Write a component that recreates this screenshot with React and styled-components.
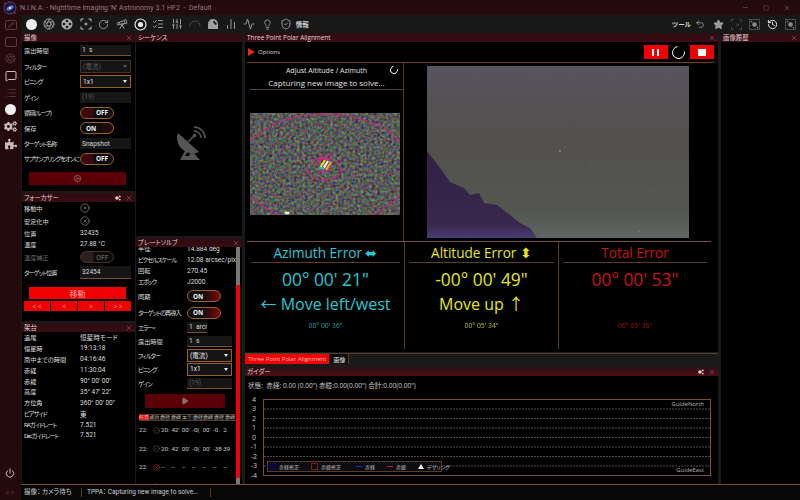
import React from 'react'
import styled, { createGlobalStyle, css } from 'styled-components'
import {
  Aperture,
  RotateCw,
  Telescope,
  ListChecks,
  SlidersVertical,
  Lightbulb,
  ShieldCheck,
  ChartNoAxesColumn,
  Star,
  History,
  Power,
  Pencil,
  MessageSquare,
  List,
  Play,
  X,
  CircleX,
  CircleCheck,
  Minus,
  Square,
  Activity,
  Undo2,
  Cog,
} from 'lucide-react'
import { FaCogs, FaPuzzlePiece } from 'react-icons/fa'

const TAN = '#7a5030'
const LINE = '#5a3c24'

const GlobalStyle = createGlobalStyle`
  html, body { margin: 0; padding: 0; background: #1a1a1a; }
  body {
    width: 800px;
    height: 500px;
    overflow: hidden;
    font-family: "Open Sans", "Noto Sans CJK JP", sans-serif;
    font-feature-settings: "palt";
    color: #d8d8d8;
  }
  * { box-sizing: border-box; }
`

const Window = styled.div`
  width: 800px;
  height: 500px;
  display: flex;
  flex-direction: column;
  overflow: hidden;
`

const TitleBar = styled.div`
  height: 15px;
  flex: none;
  display: flex;
  align-items: center;
  background: #24090d;
  padding-left: 3px;
  color: #8d7c7f;
  font-family: Roboto, sans-serif;
  font-size: 7.1px;
`

const TitleText = styled.span`
  margin-left: 3px;
  white-space: pre;
`

const WinButtons = styled.div`
  margin-left: auto;
  display: flex;
  align-items: center;
  gap: 14px;
  padding-right: 9px;
  color: #6e5a5d;
`

const Below = styled.div`
  flex: 1;
  min-height: 0;
  display: flex;
`

const Sidebar = styled.div`
  width: 21px;
  flex: none;
  display: flex;
  flex-direction: column;
  align-items: center;
  background: #24090d;
  padding-top: 1px;
`

const SideIcon = styled.div`
  height: 17px;
  display: flex;
  align-items: center;
  justify-content: center;
  color: ${(p) => (p.$on ? '#c9bcbc' : '#54343a')};
`

const SideBox = styled.div`
  width: 12px;
  height: 10px;
  border: 1px solid #5a3a40;
  border-radius: 2px;
  display: flex;
  align-items: center;
  justify-content: center;
  color: #7a5a60;
`

const SideFoot = styled.div`
  margin-top: auto;
  display: flex;
  flex-direction: column;
  align-items: center;
  gap: 10px;
  padding-bottom: 3px;
  color: #e0e0e0;
  font-size: 7px;
`

const DimText = styled.span`
  color: #6a4a4e;
  letter-spacing: 1px;
`

const WhiteDot = styled.div`
  width: ${(p) => p.$size || 11}px;
  height: ${(p) => p.$size || 11}px;
  border-radius: 50%;
  background: #eeeeee;
`

const Content = styled.div`
  flex: 1;
  min-width: 0;
  display: flex;
  flex-direction: column;
`

const Toolbar = styled.div`
  height: 18px;
  flex: none;
  display: flex;
  align-items: center;
  background: #181818;
  padding-left: 1px;
`

const ToolIcon = styled.div`
  width: 18.2px;
  height: 18px;
  flex: none;
  display: flex;
  align-items: center;
  justify-content: center;
  color: ${(p) => (p.$dim ? '#4a4a4a' : p.$bright ? '#f0f0f0' : '#9a9a9a')};
`

const ToolLabel = styled.span`
  font-size: 6.5px;
  font-weight: 700;
  color: #d0d0d0;
  margin-left: ${(p) => p.$ml || 0}px;
`

const ToolSpacer = styled.div`
  flex: 1;
`

const Main = styled.div`
  flex: 1;
  min-height: 0;
  display: flex;
`

const Column = styled.div`
  width: ${(p) => p.$w}px;
  margin-left: ${(p) => p.$ml || 0}px;
  flex: none;
  display: flex;
  flex-direction: column;
`

const Panel = styled.div`
  height: ${(p) => (p.$h ? `${p.$h}px` : 'auto')};
  flex: ${(p) => (p.$h ? 'none' : 1)};
  margin-top: ${(p) => p.$mt || 0}px;
  display: flex;
  flex-direction: column;
  background: #000;
  overflow: hidden;
`

const Head = styled.div`
  height: 9px;
  flex: none;
  display: flex;
  align-items: center;
  gap: 5px;
  padding: 0 2px;
  background: ${(p) =>
    p.$glow
      ? 'linear-gradient(#2a1015, #4e0c14)'
      : 'linear-gradient(#2c0c12, #3a0b12)'};
  font-size: 6.4px;
  color: #e2d5d5;
  white-space: nowrap;
`

const HeadTools = styled.div`
  margin-left: auto;
  display: flex;
  align-items: center;
  gap: 4px;
  color: #a06a70;
`

const Row = styled.div`
  display: grid;
  grid-template-columns: ${(p) => p.$label || 56}px 1fr;
  align-items: center;
  height: ${(p) => p.$h || 15.5}px;
  padding: 0 ${(p) => p.$pr ?? 4}px 0 2px;
  font-family: Roboto, "Noto Sans CJK JP", sans-serif;
  font-size: 6.6px;
  white-space: nowrap;
  color: ${(p) => (p.$dim ? '#6a6a6a' : '#dcdcdc')};
`

const RowLabel = styled.span`
  overflow: hidden;
  font-size: 6.2px;
  letter-spacing: ${(p) => (p.$kana ? '-1px' : '0')};
`

const Value = styled.span`
  color: inherit;
`

const Input = styled.div`
  height: ${(p) => p.$h || 11}px;
  width: ${(p) => (p.$w ? `${p.$w}px` : 'auto')};
  overflow: hidden;
  display: flex;
  align-items: center;
  padding-left: 2px;
  background: #161616;
  color: ${(p) => (p.$dim ? '#5a5a5a' : '#d8d8d8')};
  ${(p) =>
    p.$line &&
    css`
      border-bottom: 1px solid ${TAN};
    `}
`

const Select = styled.div`
  height: ${(p) => p.$h || 13}px;
  display: flex;
  align-items: center;
  justify-content: space-between;
  padding: 0 3px 0 2px;
  background: #141414;
  border: 1px solid ${(p) => (p.$dim ? '#4a3020' : '#9a6028')};
  color: ${(p) => (p.$dim ? '#5a5a5a' : '#e8e8e8')};
`

const Caret = styled.i`
  width: 0;
  height: 0;
  border-left: 2.5px solid transparent;
  border-right: 2.5px solid transparent;
  border-top: 3px solid ${(p) => (p.$dim ? '#5a5a5a' : '#e8e8e8')};
`

const ToggleBox = styled.div`
  width: ${(p) => p.$w || 34}px;
  height: 12px;
  border: 1px solid ${(p) => (p.$dim ? '#4a3020' : '#9a6028')};
  border-radius: 6px;
  display: flex;
  align-items: center;
  justify-content: ${(p) => (p.$on ? 'flex-start' : 'flex-end')};
  padding: 0 5px;
  font-family: "Open Sans", sans-serif;
  font-size: 6.4px;
  font-weight: 700;
  color: ${(p) => (p.$dim ? '#555' : '#f2f2f2')};
  background: ${(p) =>
    p.$on
      ? `linear-gradient(90deg, #0c0c0c 45%, ${p.$hot ? '#7a0a0a' : '#2a0a0a'} 100%)`
      : `linear-gradient(90deg, ${p.$dim ? '#2a2020' : '#3a0a0e'} 36%, #0c0c0c 40%)`};
`

const Toggle = ({ on, dim, hot, w }) => (
  <ToggleBox $on={on} $dim={dim} $hot={hot} $w={w}>
    {on ? 'ON' : 'OFF'}
  </ToggleBox>
)

const Action = styled.div`
  width: ${(p) => p.$w || 97}px;
  height: ${(p) => p.$h || 13}px;
  margin: ${(p) => p.$mt || 0}px 0 0 ${(p) => p.$ml ?? 7}px;
  display: flex;
  align-items: center;
  justify-content: center;
  background: ${(p) => (p.$hot ? '#f00000' : '#5a0006')};
  color: ${(p) => (p.$hot ? '#f4a8a8' : '#8a6a6a')};
  font-size: 8px;
`

const StepRow = styled.div`
  display: grid;
  grid-template-columns: repeat(4, 1fr);
  gap: 1px;
  margin: 2px 4px 0 2px;
`

const Step = styled.div`
  height: 10px;
  display: flex;
  align-items: center;
  justify-content: center;
  background: #f00000;
  color: #f4b0b0;
  font-size: 6.4px;
`

const Dish = styled.div`
  flex: 1;
  display: flex;
  align-items: center;
  justify-content: center;
  padding: 8px 0 0 3px;
`

const SolveBody = styled.div`
  flex: 1;
  min-height: 0;
  display: flex;
`

const SolveContent = styled.div`
  flex: 1;
  min-width: 0;
  overflow: hidden;
`

const ClipTop = styled.div`
  margin-top: -4px;
`

const ScrollTrack = styled.div`
  width: 4px;
  flex: none;
  margin-right: 2px;
  display: flex;
  flex-direction: column;
  background: #777;
  padding: 38px 0 6px;
`

const ScrollThumb = styled.div`
  flex: 1;
  background: #f00000;
`

const ResultTable = styled.div`
  margin: 6px 0 0 3px;
  font-family: Roboto, sans-serif;
  font-size: 6.2px;
`

const ResultHead = styled.div`
  display: grid;
  grid-template-columns: 10px repeat(8, 1fr);
  height: 7px;
  align-items: center;
  background: #0c0c0c;
  border-top: 1px solid ${LINE};
  border-bottom: 1px solid ${LINE};
  overflow: hidden;
  white-space: nowrap;
`

const ResultHeadCell = styled.span`
  overflow: hidden;
  min-width: 0;
  font-size: 5.2px;
  ${(p) =>
    p.$on &&
    css`
      background: #f00000;
      color: #f2d0d0;
    `}
`

const ResultRow = styled.div`
  display: grid;
  grid-template-columns: 14px 8px repeat(7, 10.4px);
  align-items: center;
  height: ${(p) => p.$h || 18.6}px;
  white-space: nowrap;
  color: #c8c8c8;
`

const Cell = styled.span`
  overflow: hidden;
  color: ${(p) => (p.$icon ? '#a8a8a8' : 'inherit')};
  display: flex;
  align-items: center;
`

const BadCell = styled(Cell)`
  color: #f04040;
`

const OptionsBar = styled.div`
  height: 21px;
  flex: none;
  margin: 0 4px 0 2px;
  display: flex;
  align-items: center;
  border-bottom: 1px solid #6a4418;
  font-size: 6px;
`

const OptionsArrow = styled.i`
  margin-left: 1px;
  width: 0;
  height: 0;
  border-left: 7px solid #e03010;
  border-top: 4.5px solid transparent;
  border-bottom: 4.5px solid transparent;
`

const OptionsLabel = styled.span`
  margin-left: 3px;
  color: #d8d8d8;
`

const RedButton = styled.div`
  width: 24px;
  height: 14px;
  flex: none;
  display: flex;
  align-items: center;
  justify-content: center;
  background: #f00000;
  color: #fff;
  margin-left: ${(p) => (p.$auto ? 'auto' : `${p.$ml || 0}px`)};
`

const PauseBars = styled.i`
  width: 7px;
  height: 7px;
  border-left: 2.5px solid #fff;
  border-right: 2.5px solid #fff;
`

const StopBlock = styled.i`
  width: 8px;
  height: 7px;
  background: #fff;
`

const Spinner = styled.div`
  width: ${(p) => p.$size}px;
  height: ${(p) => p.$size}px;
  margin-left: ${(p) => p.$ml || 0}px;
  border: 1px solid #f0f0f0;
  border-top-color: transparent;
  border-radius: 50%;
  transform: rotate(35deg);
  flex: none;
`

const Viewer = styled.div`
  height: 179px;
  flex: none;
  margin: 0 7px 0 2px;
  display: flex;
  border-bottom: 1px solid ${TAN};
`

const SolveSide = styled.div`
  width: 157px;
  flex: none;
  border-right: 1px solid ${LINE};
  display: flex;
  flex-direction: column;
  padding-left: 3px;
`

const SideTitle = styled.div`
  height: 27px;
  display: flex;
  flex-direction: column;
  align-items: center;
  justify-content: flex-end;
  border-bottom: 1px solid ${LINE};
  color: #e0e0e0;
  position: relative;
`

const SideLine = styled.span`
  font-size: ${(p) => p.$size}px;
  line-height: 12px;
`

const SideSpin = styled.div`
  position: absolute;
  top: 3px;
  right: 5px;
`

const Picture = styled.div`
  margin-top: ${(p) => p.$mt}px;
  margin-left: ${(p) => p.$ml || 0}px;
  width: ${(p) => p.$w}px;
  height: ${(p) => p.$h}px;
  flex: none;
  & > svg {
    display: block;
  }
`

const ErrorGrid = styled.div`
  height: 107px;
  flex: none;
  margin: 0 7px 0 2px;
  display: grid;
  grid-template-columns: 157px 154px 1fr;
`

const ErrorCol = styled.div`
  display: flex;
  flex-direction: column;
  align-items: center;
  padding: 0 4px;
  color: ${(p) => p.$color};
  & + & {
    border-left: 1px solid ${LINE};
  }
`

const ErrorTitle = styled.div`
  width: 100%;
  height: 21px;
  text-align: center;
  font-size: 13.6px;
  line-height: 21px;
  border-bottom: 1px solid ${LINE};
  white-space: nowrap;
`

const ErrorValue = styled.div`
  margin-top: 5px;
  height: 22px;
  line-height: 22px;
  font-size: 17.4px;
`

const ErrorMove = styled.div`
  margin-top: 3px;
  height: 22px;
  line-height: 22px;
  font-size: 16px;
  white-space: nowrap;
`

const ErrorSmall = styled.div`
  margin-top: 6px;
  font-size: 6.8px;
  line-height: 10px;
  opacity: 0.8;
`

const TabRow = styled.div`
  height: 14px;
  flex: none;
  margin-top: 1px;
  display: flex;
  align-items: flex-start;
  background: #1a1a1a;
  border-top: 1px solid ${LINE};
`

const Tab = styled.div`
  height: 10px;
  padding: 0 3px;
  display: flex;
  align-items: center;
  font-size: 6px;
  background: ${(p) => (p.$on ? '#f00000' : '#0c0c0c')};
  color: ${(p) => (p.$on ? '#f2c0c0' : '#e0e0e0')};
  margin-right: 1px;
  border-right: ${(p) => (p.$on ? 0 : `1px solid ${LINE}`)};
`

const GuiderBody = styled.div`
  flex: 1;
  padding: 5px 8px 0 3px;
  display: flex;
  flex-direction: column;
`

const GuiderStatus = styled.div`
  height: 9px;
  line-height: 9px;
  white-space: nowrap;
  font-size: 6.6px;
  color: #c8c8c8;
`

const ChartWrap = styled.div`
  margin-top: 4.75px;
  display: flex;
`

const YAxis = styled.div`
  width: 15px;
  flex: none;
  display: flex;
  flex-direction: column;
  padding-right: 3px;
  font-size: 7px;
`

const YLabel = styled.span`
  height: 9.5px;
  line-height: 9.5px;
  text-align: center;
  color: #c8c8c8;
`

const ChartBox = styled.div`
  flex: 1;
  height: 77px;
  margin-top: 4.5px;
  position: relative;
  border: 1px solid ${TAN};
  & > svg {
    display: block;
  }
`

const GuideTag = styled.span`
  position: absolute;
  right: 6px;
  ${(p) => (p.$top ? 'top: 0;' : 'bottom: 0;')}
  font-size: 5.9px;
  line-height: 9px;
  color: #b8b8b8;
`

const Legend = styled.div`
  position: absolute;
  left: 3px;
  bottom: 3px;
  width: 175px;
  height: 11px;
  display: flex;
  align-items: center;
  padding-left: 1px;
  background: #0c0c12;
  border: 1px solid ${LINE};
  font-size: 5px;
  color: #c0c0c0;
  white-space: nowrap;
`

const LegendItem = styled.div`
  display: flex;
  align-items: center;
  gap: 3px;
  width: ${(p) => p.$w}px;
  flex: none;
`

const Swatch = styled.i`
  width: 7px;
  height: 7px;
  background: ${(p) => (p.$fill ? '#0a0a3a' : 'transparent')};
  border: 1px solid ${(p) => p.$c};
`

const Dash = styled.i`
  width: 6px;
  height: 1px;
  margin-left: 3px;
  background: ${(p) => p.$c};
`

const Tri = styled.i`
  width: 0;
  height: 0;
  margin-left: 3px;
  border-left: 3px solid transparent;
  border-right: 3px solid transparent;
  border-bottom: 5px solid #eee;
`

const StatusBar = styled.div`
  height: 16px;
  flex: none;
  display: flex;
  align-items: center;
  background: #070707;
  border-top: 1px solid ${TAN};
  font-family: Roboto, "Noto Sans CJK JP", sans-serif;
  font-size: 6.5px;
  color: #d0d0d0;
  padding-left: 3px;
`

const StatusItem = styled.div`
  width: ${(p) => p.$w}px;
  flex: none;
  white-space: pre;
  height: 9px;
  line-height: 9px;
  border-right: 1px solid ${LINE};
  overflow: hidden;
  margin-right: 5px;
`

const Logo = () => (
  <svg width="14" height="14" viewBox="0 0 14 14">
    <circle cx="7" cy="7" r="6" fill="#241038" stroke="#4a4a8a" strokeWidth="1" />
    <ellipse cx="7" cy="7" rx="4" ry="2" fill="#5a78c8" transform="rotate(-30 7 7)" />
    <circle cx="7" cy="7" r="1.2" fill="#dde" />
    <circle cx="2" cy="2" r="0.8" fill="#c04050" />
    <circle cx="12" cy="12" r="0.8" fill="#c04050" />
  </svg>
)

const FilterWheel = () => (
  <svg width="12" height="12" viewBox="0 0 12 12">
    <circle cx="6" cy="6" r="5.6" fill="#a8a8a8" />
    <circle cx="6" cy="3" r="1.3" fill="#181818" />
    <circle cx="6" cy="9" r="1.3" fill="#181818" />
    <circle cx="3" cy="6" r="1.3" fill="#181818" />
    <circle cx="9" cy="6" r="1.3" fill="#181818" />
  </svg>
)

const FocusMark = () => (
  <svg width="12" height="12" viewBox="0 0 12 12" fill="none" stroke="#c0c0c0" strokeWidth="1">
    <path d="M1 3.5V1h2.5M8.5 1H11v2.5M11 8.5V11H8.5M3.5 11H1V8.5M6 4.5v3M4.5 6h3" />
  </svg>
)

const TargetRing = () => (
  <svg width="13" height="13" viewBox="0 0 13 13" fill="none">
    <circle cx="6.5" cy="6.5" r="5.5" stroke="#e8e8e8" strokeWidth="1.2" />
    <circle cx="6.5" cy="6.5" r="2.6" fill="#e8e8e8" />
  </svg>
)

const ArcMark = () => (
  <svg width="12" height="12" viewBox="0 0 12 12" fill="none" stroke="#4a4a4a" strokeWidth="1">
    <path d="M1 8a5 5 0 0 1 10 0" />
  </svg>
)

const DomeMark = () => (
  <svg width="12" height="12" viewBox="0 0 12 12">
    <path d="M1 11V6a5 5 0 0 1 10 0v5z" fill="#a0a0a0" />
    <path d="M7 2.5l3 3.5-1.5 1-2.5-3z" fill="#181818" />
  </svg>
)

const DotSquare = () => (
  <svg width="11" height="11" viewBox="0 0 11 11" fill="none" stroke="#8a8a8a" strokeWidth="0.7">
    <rect x="0.5" y="0.5" width="10" height="10" strokeDasharray="2 1" />
    <circle cx="5.5" cy="5.5" r="2" fill="#8a8a8a" />
    <circle cx="2.5" cy="2.5" r="0.5" fill="#8a8a8a" />
    <circle cx="8.5" cy="8.5" r="0.5" fill="#8a8a8a" />
  </svg>
)

const BracketMark = () => (
  <svg width="11" height="11" viewBox="0 0 11 11" fill="none" stroke="#505050" strokeWidth="0.8">
    <path d="M0.5 3V0.5H3M8 0.5h2.5V3M10.5 8v2.5H8M3 10.5H0.5V8M6 7V4.5M7.5 7V5" />
  </svg>
)

const SpeakerMark = () => (
  <svg width="6" height="6" viewBox="0 0 6 6">
    <circle cx="2" cy="3" r="1.8" fill="#e0d0d0" />
    <circle cx="4.8" cy="1.4" r="0.9" fill="#e0d0d0" />
    <circle cx="4.8" cy="4.6" r="0.9" fill="#e0d0d0" />
  </svg>
)

const DishMark = () => (
  <svg width="32" height="36" viewBox="0 0 32 36">
    <g fill="#555">
      <path d="M3 8a15.5 15.5 0 0 0 21 19z" />
      <polygon points="11,24 5,35 25,35 18,27 15.5,28 14,31 10,31 13,26" />
    </g>
    <g fill="none" stroke="#555" strokeWidth="1.6">
      <path d="M13 17l6-6" />
      <path d="M19 6a7 7 0 0 1 7 7" />
      <path d="M19 2a11 11 0 0 1 11 11" />
    </g>
    <circle cx="19.5" cy="10.5" r="1.8" fill="#555" />
  </svg>
)

// star field thumbnail with the polar alignment rings over it
const NoiseImage = () => (
  <svg width="150" height="102" viewBox="0 0 150 102">
    <defs>
      <filter id="grain" x="0" y="0" width="100%" height="100%" colorInterpolationFilters="sRGB">
        <feTurbulence type="fractalNoise" baseFrequency="0.36" numOctaves="2" seed="7" />
        <feColorMatrix
          type="matrix"
          values="0.75 0 0 0 -0.03  0 0.75 0 0 -0.02  0 0 0.75 0 -0.03  0 0 0 0 1"
        />
      </filter>
    </defs>
    <rect width="150" height="102" fill="#555" filter="url(#grain)" />
    <g fill="none" stroke="#c42a80" strokeWidth="1.4">
      <ellipse cx="75" cy="55.5" rx="86" ry="54.5" strokeDasharray="4 1.5" />
      <ellipse cx="74" cy="56" rx="17" ry="11" strokeDasharray="3 1.5" />
      <ellipse cx="74" cy="52" rx="6" ry="7" />
      <path d="M68 41l12 8M80 41l-12 8" />
    </g>
    <g strokeWidth="2">
      <path d="M70 55l5-8" stroke="#e8d820" />
      <path d="M73 56l5-8" stroke="#f4f4f4" />
      <path d="M76 57l5-8" stroke="#e8b020" />
    </g>
    <rect x="69" y="54" width="5" height="2.5" fill="#28b0c0" />
    <ellipse cx="37" cy="100" rx="2.5" ry="1.5" fill="#e8f0d0" />
  </svg>
)

const SkyImage = () => (
  <svg width="262" height="172" viewBox="0 0 262 172">
    <defs>
      <linearGradient id="sky" x1="0" y1="0" x2="0" y2="1">
        <stop offset="0" stopColor="#57535e" />
        <stop offset="0.45" stopColor="#52504c" />
        <stop offset="0.85" stopColor="#545651" />
        <stop offset="1" stopColor="#606662" />
      </linearGradient>
      <linearGradient id="hill" x1="0" y1="0" x2="0" y2="1">
        <stop offset="0" stopColor="#302044" />
        <stop offset="0.85" stopColor="#38284e" />
        <stop offset="1" stopColor="#4a3c72" />
      </linearGradient>
      <filter id="soft" x="0" y="0" width="100%" height="100%">
        <feTurbulence type="fractalNoise" baseFrequency="0.9" numOctaves="1" seed="3" />
        <feColorMatrix type="matrix" values="0 0 0 0 0.5  0 0 0 0 0.5  0 0 0 0 0.5  0.5 0 0 0 -0.2" />
      </filter>
    </defs>
    <rect width="262" height="172" fill="url(#sky)" />
    <rect width="262" height="172" filter="url(#soft)" opacity="0.1" />
    <polygon
      points="0,85 7,94 13,102 23,116 37,122 43,129 52,127 57,137 70,139 83,149 93,157 103,162 110,172 0,172"
      fill="url(#hill)"
    />
    <circle cx="138" cy="81" r="1" fill="#a04848" />
    <circle cx="133" cy="85" r="0.7" fill="#d0d8d0" />
    <circle cx="163" cy="96" r="0.4" fill="#aaa" />
    <circle cx="226" cy="125" r="0.4" fill="#aaa" />
    <circle cx="212" cy="165" r="0.5" fill="#bbb" />
  </svg>
)

const GridLines = () => (
  <svg width="446" height="75" viewBox="0 0 446 75">
    {[9, 18.5, 28, 37.5, 47, 56.5, 66].map((y) => (
      <line key={y} x1="0" x2="446" y1={y} y2={y} stroke="#4c4c4c" strokeWidth="1" strokeDasharray="2 1" />
    ))}
  </svg>
)

const mountRows = [
  ['追尾', '恒星時モード'],
  ['恒星時', '19:13:18'],
  ['南中までの時間', '04:16:46'],
  ['赤経', '11:30:04'],
  ['赤緯', '90° 00\' 00"'],
  ['高度', '35° 47\' 22"'],
  ['方位角', '360° 00\' 00"'],
  ['ピアサイド', '東', true],
  ['RAガイドレート', '7.521', true],
  ['Decガイドレート', '7.521', true],
]

const solveInfo = [
  ['半径', '14.884 deg'],
  ['ピクセルスケール', '12.08 arcsec/pix', true],
  ['回転', '270.45'],
  ['エポック', 'J2000', true],
]

const tableHead = ['時雲', '成功', '赤径', '赤緯', 'エラー', '赤径', '赤緯', '赤径', '赤緯']

const solveRuns = [
  ['20:', "42'", "00'", '-0(', "00'", '-0.', '2.'],
  ['20:', "42'", "00'", '-0(', "00'", '-38', '39'],
]

const errors = [
  {
    color: '#26c8d2',
    title: 'Azimuth Error ⬌',
    value: '00° 00\' 21"',
    move: '← Move left/west',
    small: '00° 00\' 36"',
  },
  {
    color: '#e6e624',
    title: 'Altitude Error ⬍',
    value: '-00° 00\' 49"',
    move: 'Move up ↑',
    small: '00° 05\' 34"',
  },
  {
    color: '#c81414',
    title: 'Total Error',
    value: '00° 00\' 53"',
    move: '\u00a0',
    small: '00° 05\' 36"',
  },
]

const Close = () => <X size={8} strokeWidth={1.5} />

const App = () => {
  return (
    <Window>
      <GlobalStyle />
      <TitleBar>
        <Logo />
        <TitleText>N.I.N.A. - Nighttime Imaging 'N' Astronomy 3.1 HF2  -  Default</TitleText>
        <WinButtons>
          <Minus size={7} />
          <Square size={6} />
          <X size={8} />
        </WinButtons>
      </TitleBar>
      <Below>
        <Sidebar>
          <SideIcon><SideBox><Pencil size={6} /></SideBox></SideIcon>
          <SideIcon><SideBox /></SideIcon>
          <SideIcon><Aperture size={11} /></SideIcon>
          <SideIcon $on><MessageSquare size={12} /></SideIcon>
          <SideIcon><List size={12} /></SideIcon>
          <SideIcon $on><WhiteDot /></SideIcon>
          <SideIcon $on><FaCogs size={13} /></SideIcon>
          <SideIcon $on><FaPuzzlePiece size={12} /></SideIcon>
          <SideFoot>
            <Power size={10} />
            <DimText>&gt;&gt;</DimText>
          </SideFoot>
        </Sidebar>
        <Content>
          <Toolbar>
            <ToolIcon $bright><WhiteDot /></ToolIcon>
            <ToolIcon><Aperture size={12} /></ToolIcon>
            <ToolIcon><FilterWheel /></ToolIcon>
            <ToolIcon><FocusMark /></ToolIcon>
            <ToolIcon><RotateCw size={11} /></ToolIcon>
            <ToolIcon><Telescope size={12} /></ToolIcon>
            <ToolIcon $bright><TargetRing /></ToolIcon>
            <ToolIcon><ListChecks size={12} /></ToolIcon>
            <ToolIcon><SlidersVertical size={12} /></ToolIcon>
            <ToolIcon $dim><ArcMark /></ToolIcon>
            <ToolIcon><DomeMark /></ToolIcon>
            <ToolIcon><ChartNoAxesColumn size={12} /></ToolIcon>
            <ToolIcon><Activity size={12} /></ToolIcon>
            <ToolIcon><Lightbulb size={11} /></ToolIcon>
            <ToolIcon><ShieldCheck size={12} /></ToolIcon>
            <ToolLabel $ml={1}>情報</ToolLabel>
            <ToolSpacer />
            <ToolLabel>ツール</ToolLabel>
            <ToolIcon><Undo2 size={10} /></ToolIcon>
            <ToolIcon><Star size={11} fill="#9a9a9a" /></ToolIcon>
            <ToolIcon $dim><BracketMark /></ToolIcon>
            <ToolIcon><DotSquare /></ToolIcon>
            <ToolIcon $bright><History size={11} /></ToolIcon>
            <ToolIcon><DotSquare /></ToolIcon>
          </Toolbar>
          <Main>
            <Column $w={113} $ml={1}>
              <Panel $h={158}>
                <Head>
                  撮像
                  <HeadTools><Close /></HeadTools>
                </Head>
                <Row $h={16.5}>
                  <RowLabel>露出時間</RowLabel>
                  <Input $line>1 &nbsp;s</Input>
                </Row>
                <Row>
                  <RowLabel $kana>フィルター</RowLabel>
                  <Select $dim>(電流)<Caret $dim /></Select>
                </Row>
                <Row>
                  <RowLabel $kana>ビニング</RowLabel>
                  <Select>1x1<Caret /></Select>
                </Row>
                <Row>
                  <RowLabel $kana>ゲイン</RowLabel>
                  <Input $dim>(19)</Input>
                </Row>
                <Row>
                  <RowLabel $kana>循環(ループ)</RowLabel>
                  <Toggle />
                </Row>
                <Row>
                  <RowLabel>保存</RowLabel>
                  <Toggle on />
                </Row>
                <Row>
                  <RowLabel $kana>ターゲット名称</RowLabel>
                  <Input>Snapshot</Input>
                </Row>
                <Row $h={14}>
                  <RowLabel $kana>サブサンプリングをオンに</RowLabel>
                  <Toggle />
                </Row>
                <Action $mt={6.5}>
                  <Cog size={9} strokeWidth={1.5} />
                </Action>
              </Panel>
              <Panel $h={128} $mt={2}>
                <Head>
                  フォーカサー
                  <HeadTools>
                    <SpeakerMark />
                    <Close />
                  </HeadTools>
                </Head>
                <Row $h={12.5}>
                  <RowLabel>移動中</RowLabel>
                  <CircleX size={10} strokeWidth={1} />
                </Row>
                <Row $h={13}>
                  <RowLabel>安定化中</RowLabel>
                  <CircleX size={10} strokeWidth={1} />
                </Row>
                <Row $h={11}>
                  <RowLabel>位置</RowLabel>
                  <Value>32435</Value>
                </Row>
                <Row $h={11}>
                  <RowLabel>温度</RowLabel>
                  <Value>27.88 °C</Value>
                </Row>
                <Row $h={15} $dim>
                  <RowLabel>温度補正</RowLabel>
                  <Toggle dim />
                </Row>
                <Row $h={16}>
                  <RowLabel $kana>ターゲット位置</RowLabel>
                  <Input $line $h={13}>32454</Input>
                </Row>
                <Action $mt={6.5} $h={12} $hot>移動</Action>
                <StepRow>
                  <Step>&lt; &lt;</Step>
                  <Step>&lt;</Step>
                  <Step>&gt;</Step>
                  <Step>&gt; &gt;</Step>
                </StepRow>
              </Panel>
              <Panel $mt={2}>
                <Head>
                  架台
                  <HeadTools><Close /></HeadTools>
                </Head>
                <div>
                  {mountRows.map(([k, v, kana]) => (
                    <Row key={k} $h={10.9}>
                      <RowLabel $kana={kana}>{k}</RowLabel>
                      <Value>{v}</Value>
                    </Row>
                  ))}
                </div>
              </Panel>
            </Column>
            <Column $w={106} $ml={1}>
              <Panel $h={203}>
                <Head>
                  シーケンス
                </Head>
                <Dish>
                  <DishMark />
                </Dish>
              </Panel>
              <Panel $mt={2}>
                <Head>
                  プレートソルブ
                  <HeadTools><Close /></HeadTools>
                </Head>
                <SolveBody>
                  <SolveContent>
                    <ClipTop>
                      {solveInfo.map(([k, v, kana]) => (
                        <Row key={k} $label={49} $h={11} $pr={1}>
                          <RowLabel $kana={kana}>{k}</RowLabel>
                          <Value>{v}</Value>
                        </Row>
                      ))}
                      <Row $label={49} $h={18}>
                        <RowLabel>同期</RowLabel>
                        <Toggle on hot />
                      </Row>
                      <Row $label={49} $h={15}>
                        <RowLabel $kana>ターゲットの再導入</RowLabel>
                        <Toggle on hot />
                      </Row>
                      <Row $label={49} $h={14}>
                        <RowLabel $kana>エラー&lt;</RowLabel>
                        <Input $line $h={11} $w={20}>1 &nbsp;arcmin</Input>
                      </Row>
                      <Row $label={49} $h={14}>
                        <RowLabel>露出時間</RowLabel>
                        <Input $line $h={11}>1 &nbsp;s</Input>
                      </Row>
                      <Row $label={49} $h={14}>
                        <RowLabel $kana>フィルター</RowLabel>
                        <Select>(電流)<Caret /></Select>
                      </Row>
                      <Row $label={49} $h={14}>
                        <RowLabel $kana>ビニング</RowLabel>
                        <Select>1x1<Caret /></Select>
                      </Row>
                      <Row $label={49} $h={15}>
                        <RowLabel $kana>ゲイン</RowLabel>
                        <Input $dim $line $h={11}>(19)</Input>
                      </Row>
                    </ClipTop>
                    <Action $w={80} $h={14} $ml={9} $mt={3}>
                      <Play size={8} fill="#8a6a6a" />
                    </Action>
                    <ResultTable>
                      <ResultHead>
                        {tableHead.map((t, i) => (
                          <ResultHeadCell key={t + i} $on={i === 0}>{t}</ResultHeadCell>
                        ))}
                      </ResultHead>
                      {solveRuns.map((run, i) => (
                        <ResultRow key={i}>
                          <Cell>22:</Cell>
                          <Cell $icon><CircleCheck size={7} strokeWidth={1} /></Cell>
                          {run.map((v, j) => (
                            <Cell key={j}>{v}</Cell>
                          ))}
                        </ResultRow>
                      ))}
                      <ResultRow>
                        <Cell>22:</Cell>
                        <BadCell><CircleX size={7} strokeWidth={1.4} /></BadCell>
                        {[0, 1, 2, 3, 4, 5, 6].map((j) => (
                          <Cell key={j}>--</Cell>
                        ))}
                      </ResultRow>
                      <ResultRow>
                        <Cell>&nbsp;</Cell>
                        <Cell $icon><CircleCheck size={7} strokeWidth={1} /></Cell>
                      </ResultRow>
                    </ResultTable>
                  </SolveContent>
                  <ScrollTrack>
                    <ScrollThumb />
                  </ScrollTrack>
                </SolveBody>
              </Panel>
            </Column>
            <Column $w={473} $ml={3}>
              <Panel $h={319}>
                <Head>
                  Three Point Polar Alignment
                  <HeadTools><Close /></HeadTools>
                </Head>
                <OptionsBar>
                  <OptionsArrow />
                  <OptionsLabel>Options</OptionsLabel>
                  <RedButton $auto><PauseBars /></RedButton>
                  <Spinner $size={13} $ml={4.5} />
                  <RedButton $ml={5}><StopBlock /></RedButton>
                </OptionsBar>
                <Viewer>
                  <SolveSide>
                    <SideTitle>
                      <SideLine $size={7}>Adjust Altitude / Azimuth</SideLine>
                      <SideLine $size={8}>Capturing new image to solve...</SideLine>
                      <SideSpin><Spinner $size={8} /></SideSpin>
                    </SideTitle>
                    <Picture $mt={23} $w={150} $h={102}>
                      <NoiseImage />
                    </Picture>
                  </SolveSide>
                  <Picture $mt={3} $ml={23} $w={262} $h={172}>
                    <SkyImage />
                  </Picture>
                </Viewer>
                <ErrorGrid>
                  {errors.map((e) => (
                    <ErrorCol key={e.title} $color={e.color}>
                      <ErrorTitle>{e.title}</ErrorTitle>
                      <ErrorValue>{e.value}</ErrorValue>
                      <ErrorMove>{e.move}</ErrorMove>
                      <ErrorSmall>{e.small}</ErrorSmall>
                    </ErrorCol>
                  ))}
                </ErrorGrid>
              </Panel>
              <TabRow>
                <Tab $on>Three Point Polar Alignment</Tab>
                <Tab>画像</Tab>
              </TabRow>
              <Panel>
                <Head $glow>
                  ガイダー
                  <HeadTools>
                    <SpeakerMark />
                    <Close />
                  </HeadTools>
                </Head>
                <GuiderBody>
                  <GuiderStatus>状態:&nbsp; 赤経: 0.00 (0.00") 赤緯:0.00(0.00") 合計:0.00(0.00")</GuiderStatus>
                  <ChartWrap>
                    <YAxis>
                      {[4, 3, 2, 1, 0, -1, -2, -3, -4].map((n) => (
                        <YLabel key={n}>{n}</YLabel>
                      ))}
                    </YAxis>
                    <ChartBox>
                      <GridLines />
                      <GuideTag $top>GuideNorth</GuideTag>
                      <GuideTag>GuideEast</GuideTag>
                      <Legend>
                        <LegendItem $w={42}><Swatch $c="#0a0a5a" $fill />赤経修正</LegendItem>
                        <LegendItem $w={42}><Swatch $c="#7a1818" />赤緯修正</LegendItem>
                        <LegendItem $w={31}><Dash $c="#2030b0" />赤経</LegendItem>
                        <LegendItem $w={31}><Dash $c="#c02020" />赤緯</LegendItem>
                        <LegendItem $w={28}><Tri />デザリング</LegendItem>
                      </Legend>
                    </ChartBox>
                  </ChartWrap>
                </GuiderBody>
              </Panel>
            </Column>
            <Column $w={79} $ml={3}>
              <Panel>
                <Head>
                  画像履歴
                  <HeadTools><Close /></HeadTools>
                </Head>
              </Panel>
            </Column>
          </Main>
          <StatusBar>
            <StatusItem $w={58}>撮像： カメラ待ち</StatusItem>
            <StatusItem $w={124}>TPPA： Capturing new image to solve...</StatusItem>
          </StatusBar>
        </Content>
      </Below>
    </Window>
  )
}

export default App
